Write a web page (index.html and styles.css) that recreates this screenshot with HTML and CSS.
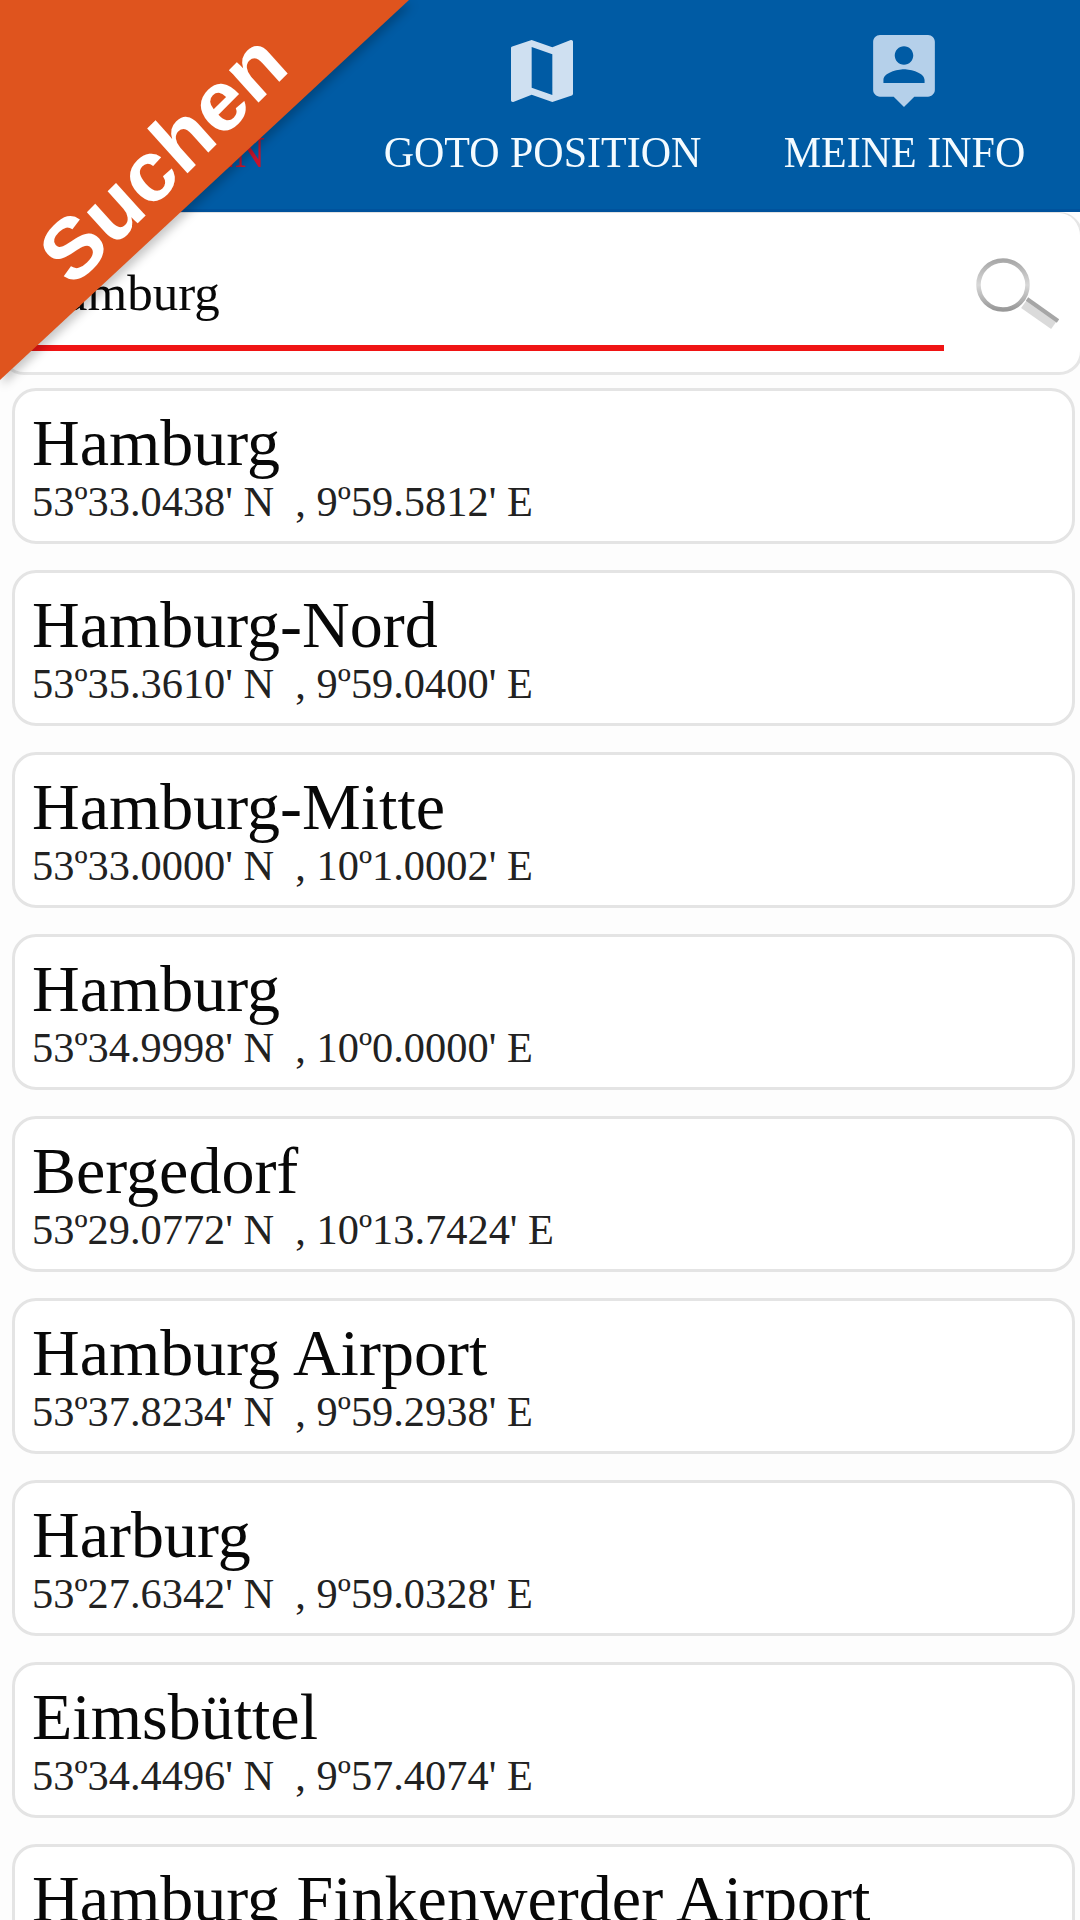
FILE: index.html
```html
<!DOCTYPE html>
<html lang="de">
<head>
  <title>Suchen</title>
  <meta charset="UTF-8">
  <meta name="viewport" content="width=device-width, initial-scale=1">
  <link rel="stylesheet" href="styles.css">
</head>
<body>
  <div class="navbar">
    <a href="#" class="tab active">
      <span>SUCHEN</span>
    </a>
    <a href="#" class="tab">
      <svg class="icon-map" viewBox="3 3 18 18" width="62" height="62">
        <path fill="#cfe0f1" d="M20.5 3l-.16.03L15 5.1 9 3 3.36 4.9c-.21.07-.36.25-.36.48V20.500c0 .28.22.5.5.5l.16-.03L9 18.900l6 2.100 5.640-1.900c.21-.07.36-.25.36-.48V3.500c0-.28-.22-.5-.5-.5zM15 19l-6-2.110V5l6 2.110V19z"/>
      </svg>
      <span>GOTO POSITION</span>
    </a>
    <a href="#" class="tab">
      <svg class="icon-user" viewBox="3 2 18 21" width="62" height="72">
        <path fill="#b5d0ea" d="M19 2H5c-1.110 0-2 .9-2 2v14c0 1.100.89 2 2 2h4l3 3 3-3h4c1.100 0 2-.9 2-2V4c0-1.100-.9-2-2-2zm-7 3.300c1.490 0 2.700 1.210 2.700 2.700s-1.210 2.700-2.700 2.700S9.300 9.490 9.300 8s1.210-2.700 2.700-2.700zM18 16H6v-.9c0-2 4-3.100 6-3.100s6 1.100 6 3.100v.9z"/>
      </svg>
      <span>MEINE INFO</span>
    </a>
  </div>

  <div class="search">
    <div class="field"><span>Hamburg</span></div>
    <svg class="icon-search" viewBox="0 0 90 80" width="90" height="80">
      <defs>
        <linearGradient id="ring" x1="0" y1="0" x2="0" y2="1">
          <stop offset="0" stop-color="#a8a8a8"/>
          <stop offset="0.5" stop-color="#d8d8d8"/>
          <stop offset="1" stop-color="#999"/>
        </linearGradient>
      </defs>
      <circle cx="30" cy="35" r="24.500" fill="none" stroke="url(#ring)" stroke-width="4.500"/>
      <path d="M51 54L81 75" stroke="#dadada" stroke-width="10"/>
      <path d="M54 49L85 71" stroke="#a6a6a6" stroke-width="4"/>
    </svg>
  </div>

  <div class="list">
    <div class="card"><h2>Hamburg</h2><p>53º33.0438' N&nbsp; , 9º59.5812' E</p></div>
    <div class="card"><h2>Hamburg-Nord</h2><p>53º35.3610' N&nbsp; , 9º59.0400' E</p></div>
    <div class="card"><h2>Hamburg-Mitte</h2><p>53º33.0000' N&nbsp; , 10º1.0002' E</p></div>
    <div class="card"><h2>Hamburg</h2><p>53º34.9998' N&nbsp; , 10º0.0000' E</p></div>
    <div class="card"><h2>Bergedorf</h2><p>53º29.0772' N&nbsp; , 10º13.7424' E</p></div>
    <div class="card"><h2>Hamburg Airport</h2><p>53º37.8234' N&nbsp; , 9º59.2938' E</p></div>
    <div class="card"><h2>Harburg</h2><p>53º27.6342' N&nbsp; , 9º59.0328' E</p></div>
    <div class="card"><h2>Eimsbüttel</h2><p>53º34.4496' N&nbsp; , 9º57.4074' E</p></div>
    <div class="card"><h2>Hamburg Finkenwerder Airport</h2></div>
  </div>

  <div class="ribbon">
    <div class="ribbon-bg"></div>
    <div class="ribbon-text">Suchen</div>
  </div>
</body>
</html>
```
FILE: styles.css
```css
* {
  box-sizing: border-box;
}

body {
  position: relative;
  height: 1920px;
  margin: 0;
  overflow: hidden;
  background: #fdfdfd;
  color: #080808;
  font-family: "Liberation Serif", "Times New Roman", serif;
}

/* Navbar */
.navbar {
  display: grid;
  grid-template-columns: 361px 362px 362px;
  height: 212px;
  background: #005ba4;
  border-bottom: 3px solid #00529c;
}

.tab {
  display: flex;
  flex-direction: column;
  align-items: center;
  justify-content: flex-end;
  padding-bottom: 34px;
  color: #f4fbff;
  font-size: 42px;
  line-height: 46px;
  white-space: nowrap;
  text-decoration: none;
}

.tab span {
  padding-left: 1px;
  transform: scaleY(1.04);
}

.active {
  color: #c8142c;
}

.icon-map {
  margin-bottom: 27px;
}

.icon-user {
  margin-bottom: 22px;
}

/* Search box */
.search {
  display: flex;
  width: 1083px;
  height: 163px;
  padding: 0 0 0 27px;
  background: #fff;
  border: 3px solid #e6e6e6;
  border-top: 1px solid #e2e2e2;
  border-radius: 24px;
}

.field {
  width: 914px;
  height: 138px;
  padding-top: 52px;
  border-bottom: 6px solid #f01414;
  font-size: 51px;
  line-height: 56px;
  text-indent: -2px;
}

.icon-search {
  margin: 37px 0 0 29px;
}

/* Result list */
.list {
  display: flex;
  flex-direction: column;
  gap: 26px;
  padding: 13px 5px 0 12px;
}

.card {
  flex: none;
  height: 156px;
  padding: 22px 0 0 17px;
  background: #fff;
  border: 3px solid #e4e4e4;
  border-radius: 24px;
  white-space: nowrap;
}

.card h2 {
  margin: 0;
  font-size: 66px;
  font-weight: normal;
  line-height: 60px;
}

.card p {
  margin: 0;
  color: #222;
  font-size: 42.400px;
  line-height: 58px;
}

/* Corner ribbon */
.ribbon {
  position: absolute;
  top: 0;
  left: 0;
  filter: drop-shadow(3px 5px 5px rgba(0, 0, 0, 0.22));
}

.ribbon-bg {
  width: 409px;
  height: 380px;
  background: #df541e;
  clip-path: polygon(0 0, 100% 0, 0 100%);
}

/* no shadow on the letters, only along the ribbon edge */
.ribbon-text {
  position: absolute;
  top: 237px;
  left: 25px;
  color: #fff;
  font-family: "Liberation Sans", Arial, sans-serif;
  font-size: 83px;
  font-weight: bold;
  line-height: 83px;
  transform: matrix(0.732, -0.732, 0.67, 0.743, 0, 0);
  transform-origin: 0 0;
}
```
